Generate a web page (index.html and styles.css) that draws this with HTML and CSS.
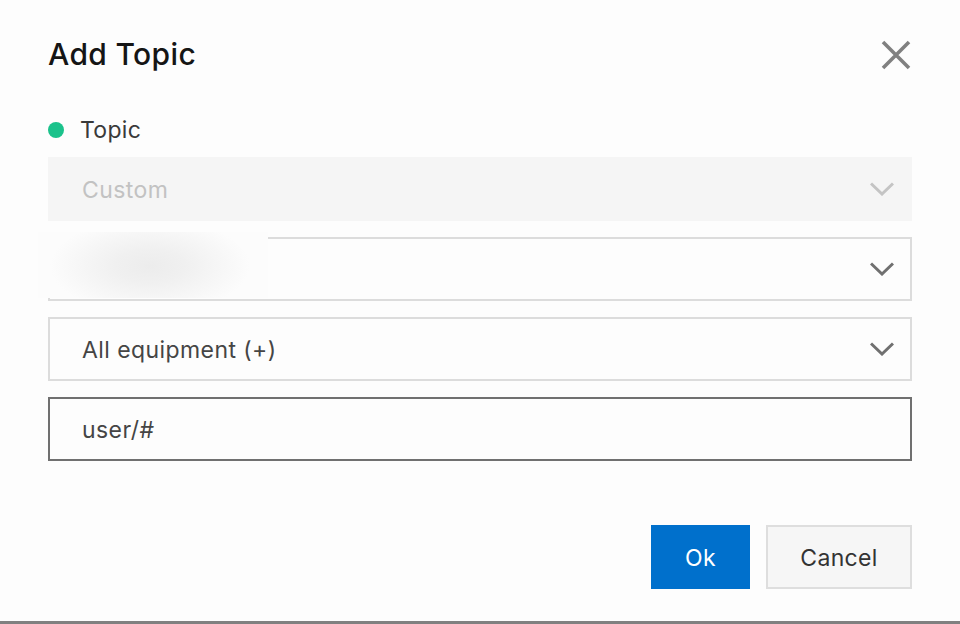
FILE: index.html
```html
<!DOCTYPE html>
<html lang="en">
<head>
    <meta charset="UTF-8">
    <title>Add Topic</title>
    <link rel="stylesheet" href="styles.css">
</head>
<body>

    <div class="dialog">
        <div class="dialog-head">
            <h1>Add Topic</h1>
            <svg class="close-icon" width="30" height="30" viewBox="0 0 30 30">
                <path d="M2 2 L28 28 M28 2 L2 28" stroke="#808080" stroke-width="3.6" fill="none"/>
            </svg>
        </div>

        <div class="field-label">
            <span class="dot"></span>
            <span>Topic</span>
        </div>

        <div class="fields">
            <div class="select disabled">
                <span class="select-text">Custom</span>
                <svg class="arrow" width="24" height="14" viewBox="0 0 24 14">
                    <path d="M1 1.5 L12 12 L23 1.5" stroke="#c4c4c4" stroke-width="3" fill="none"/>
                </svg>
            </div>

            <!-- value is blurred out in the screenshot -->
            <div class="select">
                <div class="blur-patch"></div>
                <span class="select-text"></span>
                <svg class="arrow" width="24" height="14" viewBox="0 0 24 14">
                    <path d="M1 1.5 L12 12 L23 1.5" stroke="#707070" stroke-width="3" fill="none"/>
                </svg>
            </div>

            <div class="select">
                <span class="select-text">All equipment (+)</span>
                <svg class="arrow" width="24" height="14" viewBox="0 0 24 14">
                    <path d="M1 1.5 L12 12 L23 1.5" stroke="#707070" stroke-width="3" fill="none"/>
                </svg>
            </div>

            <div class="select focused">
                <span class="select-text">user/#</span>
            </div>
        </div>

        <div class="actions">
            <button class="btn btn-primary">Ok</button>
            <button class="btn">Cancel</button>
        </div>
    </div>

    <div class="bottom-bar"></div>

</body>
</html>
```

FILE: styles.css
```css
* {
    box-sizing: border-box;
}

html, body {
    height: 100%;
}

body {
    margin: 0;
    font-family: "Inter", "Liberation Sans", sans-serif;
    background-color: #fdfdfd;
    color: #333333;
    display: flex;
    flex-direction: column;
    overflow: hidden;
}

.dialog {
    flex: 1;
    padding: 0 48px;
}

.dialog-head {
    height: 109px;
    display: flex;
    justify-content: space-between;
    align-items: flex-start;
    padding-top: 35px;
}

.dialog-head h1 {
    margin: 0;
    font-size: 30px;
    line-height: 38px;
    font-weight: 500;
    letter-spacing: 0.35px;
    color: #151515;
}

.close-icon {
    margin-top: 5px;
    margin-right: 1px;
}

.field-label {
    height: 48px;
    display: flex;
    align-items: center;
    gap: 16px;
    padding-bottom: 7px;
    font-size: 23px;
    letter-spacing: 0.3px;
    color: #3a3a3a;
}

.dot {
    width: 16px;
    height: 16px;
    border-radius: 50%;
    background-color: #1bc28b;
}

.fields {
    display: flex;
    flex-direction: column;
    gap: 16px;
}

.select {
    position: relative;
    height: 64px;
    display: flex;
    justify-content: space-between;
    align-items: center;
    padding: 0 16px 0 32px;
    border: 2px solid #dcdcdc;
    font-size: 23px;
    letter-spacing: 0.42px;
    color: #454545;
}

.select-text {
    padding-top: 2px;
}

.select.disabled {
    background-color: #f5f5f5;
    border-color: #f5f5f5;
    color: #c2c2c2;
}

.select.focused {
    border-color: #707070;
}

/* Blurred-out value, lies over the field border */
.blur-patch {
    position: absolute;
    left: -12px;
    top: -7px;
    width: 230px;
    height: 66px;
    background: radial-gradient(ellipse 100px 48px at 112px 34px, #ececec 0%, #f0f0f0 35%, #fcfcfc 100%);
}

.actions {
    display: flex;
    justify-content: flex-end;
    gap: 16px;
    margin-top: 64px;
}

.btn {
    height: 64px;
    width: 146px;
    padding-top: 2px;
    border: 2px solid #dedede;
    background-color: #f6f6f6;
    font-family: inherit;
    font-size: 23px;
    letter-spacing: 0.35px;
    color: #333333;
}

.btn-primary {
    width: 99px;
    border-color: #0070cc;
    background-color: #0070cc;
    color: #ffffff;
}

.bottom-bar {
    height: 3px;
    background-color: #808080;
}
```
